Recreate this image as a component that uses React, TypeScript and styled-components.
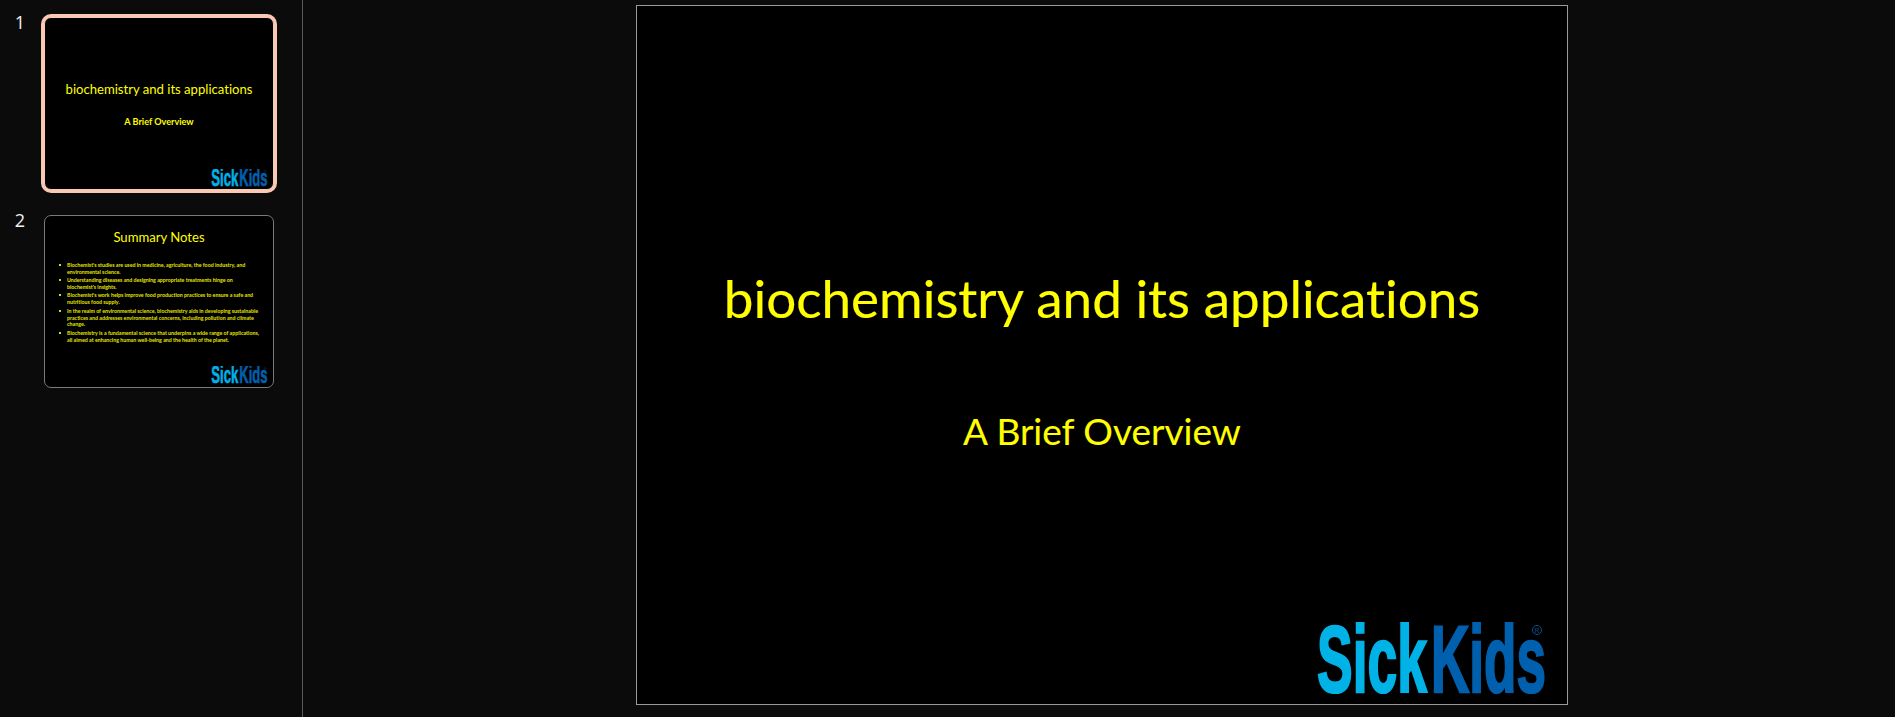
import React from "react";
import styled, { createGlobalStyle } from "styled-components";

const Global = createGlobalStyle`
  html, body, #root { margin: 0; padding: 0; height: 100%; }
  body { background: #0b0b0b; overflow: hidden; font-family: "Lato", "Liberation Sans", sans-serif; font-variant-ligatures: none; }
`;

const Page = styled.div`
  display: flex;
  height: 717px;
  background: #0b0b0b;
`;

const Rail = styled.aside`
  flex: 0 0 303px;
  box-sizing: border-box;
  border-right: 1px solid #5a5a5a;
  padding-top: 17px;
  display: flex;
  flex-direction: column;
  gap: 25px;
`;

const ThumbRow = styled.div`
  display: flex;
  align-items: flex-start;
`;

const ThumbNumber = styled.div`
  flex: 0 0 44px;
  box-sizing: border-box;
  padding-right: 4px;
  text-align: center;
  color: #f2f2f2;
  font: 400 18px/18px "Open Sans", sans-serif;
  margin-top: -4px;
`;

const Thumb = styled.div<{ $active?: boolean }>`
  position: relative;
  box-sizing: border-box;
  width: 230px;
  height: 173px;
  background: #000;
  color: #ffff00;
  border-radius: 7px;
  border: 1px solid ${(p) => (p.$active ? "#f9c9b4" : "#7a7a7a")};
  box-shadow: ${(p) => (p.$active ? "0 0 0 3px #f9c9b4" : "none")};
  text-align: center;
`;

const ThumbTitle = styled.div<{ $top: number }>`
  padding-top: ${(p) => p.$top}px;
  font-size: 13.1px;
  line-height: 17px;
`;

const ThumbSubtitle = styled.div`
  padding-top: 18px;
  font-size: 9.1px;
  line-height: 11px;
  font-weight: 700;
`;

const Bullets = styled.ul`
  list-style: none;
  margin: 0;
  padding: 16px 0 0 22px;
  text-align: left;
  font-size: 5.27px;
  line-height: 7px;
  font-weight: 700;
  color: #e6e600;
`;

const Bullet = styled.li<{ $gap: number; $lh?: number }>`
  position: relative;
  margin-top: ${(p) => p.$gap}px;
  white-space: nowrap;
  line-height: ${(p) => p.$lh ?? 7}px;
  &::before {
    content: "";
    position: absolute;
    left: -8px;
    top: 2px;
    width: 2px;
    height: 2px;
    background: #d8d800;
  }
`;

const Main = styled.main`
  flex: 1;
  padding: 5px 0 0 333px;
`;

const Slide = styled.section`
  position: relative;
  box-sizing: border-box;
  width: 932px;
  height: 700px;
  background: #000;
  border: 1px solid #9a9a9a;
  color: #ffff00;
  text-align: center;
`;

const SlideTitle = styled.h1`
  margin: 0;
  padding-top: 257px;
  font-size: 53px;
  line-height: 70px;
  font-weight: 400;
  -webkit-text-stroke: 0.15px #ffff00;
`;

const SlideSubtitle = styled.h2`
  margin: 0;
  padding-top: 76px;
  font-size: 37px;
  line-height: 44px;
  font-weight: 400;
  -webkit-text-stroke: 0.1px #ffff00;
`;

const LogoBox = styled.svg<{ $w: number; $r: number; $b: number }>`
  position: absolute;
  right: ${(p) => p.$r}px;
  bottom: ${(p) => p.$b}px;
  width: ${(p) => p.$w}px;
  height: auto;
  display: block;
`;

const Logo = ({ w, r, b }: { w: number; r: number; b: number }) => (
  <LogoBox $w={w} $r={r} $b={b} viewBox="0 0 232 72">
    <g fontFamily="Liberation Sans Narrow, Liberation Sans, sans-serif" fontWeight="700" fontSize="95">
      <text x="1" y="69.5" fill="#00b2e6" stroke="#00b2e6" strokeWidth="2.5" textLength="110" lengthAdjust="spacingAndGlyphs">Sick</text>
      <text x="115" y="69.5" fill="#0060ae" stroke="#0060ae" strokeWidth="2.5" textLength="115" lengthAdjust="spacingAndGlyphs">Kids</text>
    </g>
    <circle cx="221" cy="8" r="4.5" fill="none" stroke="#0a4f8a" strokeWidth="1" />
    <text x="221" y="11" fontSize="7" textAnchor="middle" fill="#0a4f8a" fontFamily="Liberation Sans, sans-serif">R</text>
  </LogoBox>
);

const notes: { lines: string[]; gap: number; lh?: number }[] = [
  { gap: 0, lines: ["Biochemist's studies are used in medicine, agriculture, the food industry, and", "environmental science."] },
  { gap: 1, lines: ["Understanding diseases and designing appropriate treatments hinge on", "biochemist's insights."] },
  { gap: 1, lines: ["Biochemist's work helps improve food production practices to ensure a safe and", "nutritious food supply."] },
  { gap: 2, lh: 6.5, lines: ["In the realm of environmental science, biochemistry aids in developing sustainable", "practices and addresses environmental concerns, including pollution and climate", "change."] },
  { gap: 2, lines: ["Biochemistry is a fundamental science that underpins a wide range of applications,", "all aimed at enhancing human well-being and the health of the planet."] },
];

export default function App() {
  return (
    <Page>
      <Global />
      <Rail>
        <ThumbRow>
          <ThumbNumber>1</ThumbNumber>
          <Thumb $active>
            <ThumbTitle $top={63}>biochemistry and its applications</ThumbTitle>
            <ThumbSubtitle>A Brief Overview</ThumbSubtitle>
            <Logo w={57} r={5} b={2} />
          </Thumb>
        </ThumbRow>
        <ThumbRow>
          <ThumbNumber>2</ThumbNumber>
          <Thumb>
            <ThumbTitle $top={13}>Summary Notes</ThumbTitle>
            <Bullets>
              {notes.map((n, i) => (
                <Bullet key={i} $gap={n.gap} $lh={n.lh}>
                  {n.lines.map((l, j) => (
                    <div key={j}>{l}</div>
                  ))}
                </Bullet>
              ))}
            </Bullets>
            <Logo w={57} r={5} b={3} />
          </Thumb>
        </ThumbRow>
      </Rail>
      <Main>
        <Slide>
          <SlideTitle>biochemistry and its applications</SlideTitle>
          <SlideSubtitle>A Brief Overview</SlideSubtitle>
          <Logo w={232} r={19} b={10} />
        </Slide>
      </Main>
    </Page>
  );
}
